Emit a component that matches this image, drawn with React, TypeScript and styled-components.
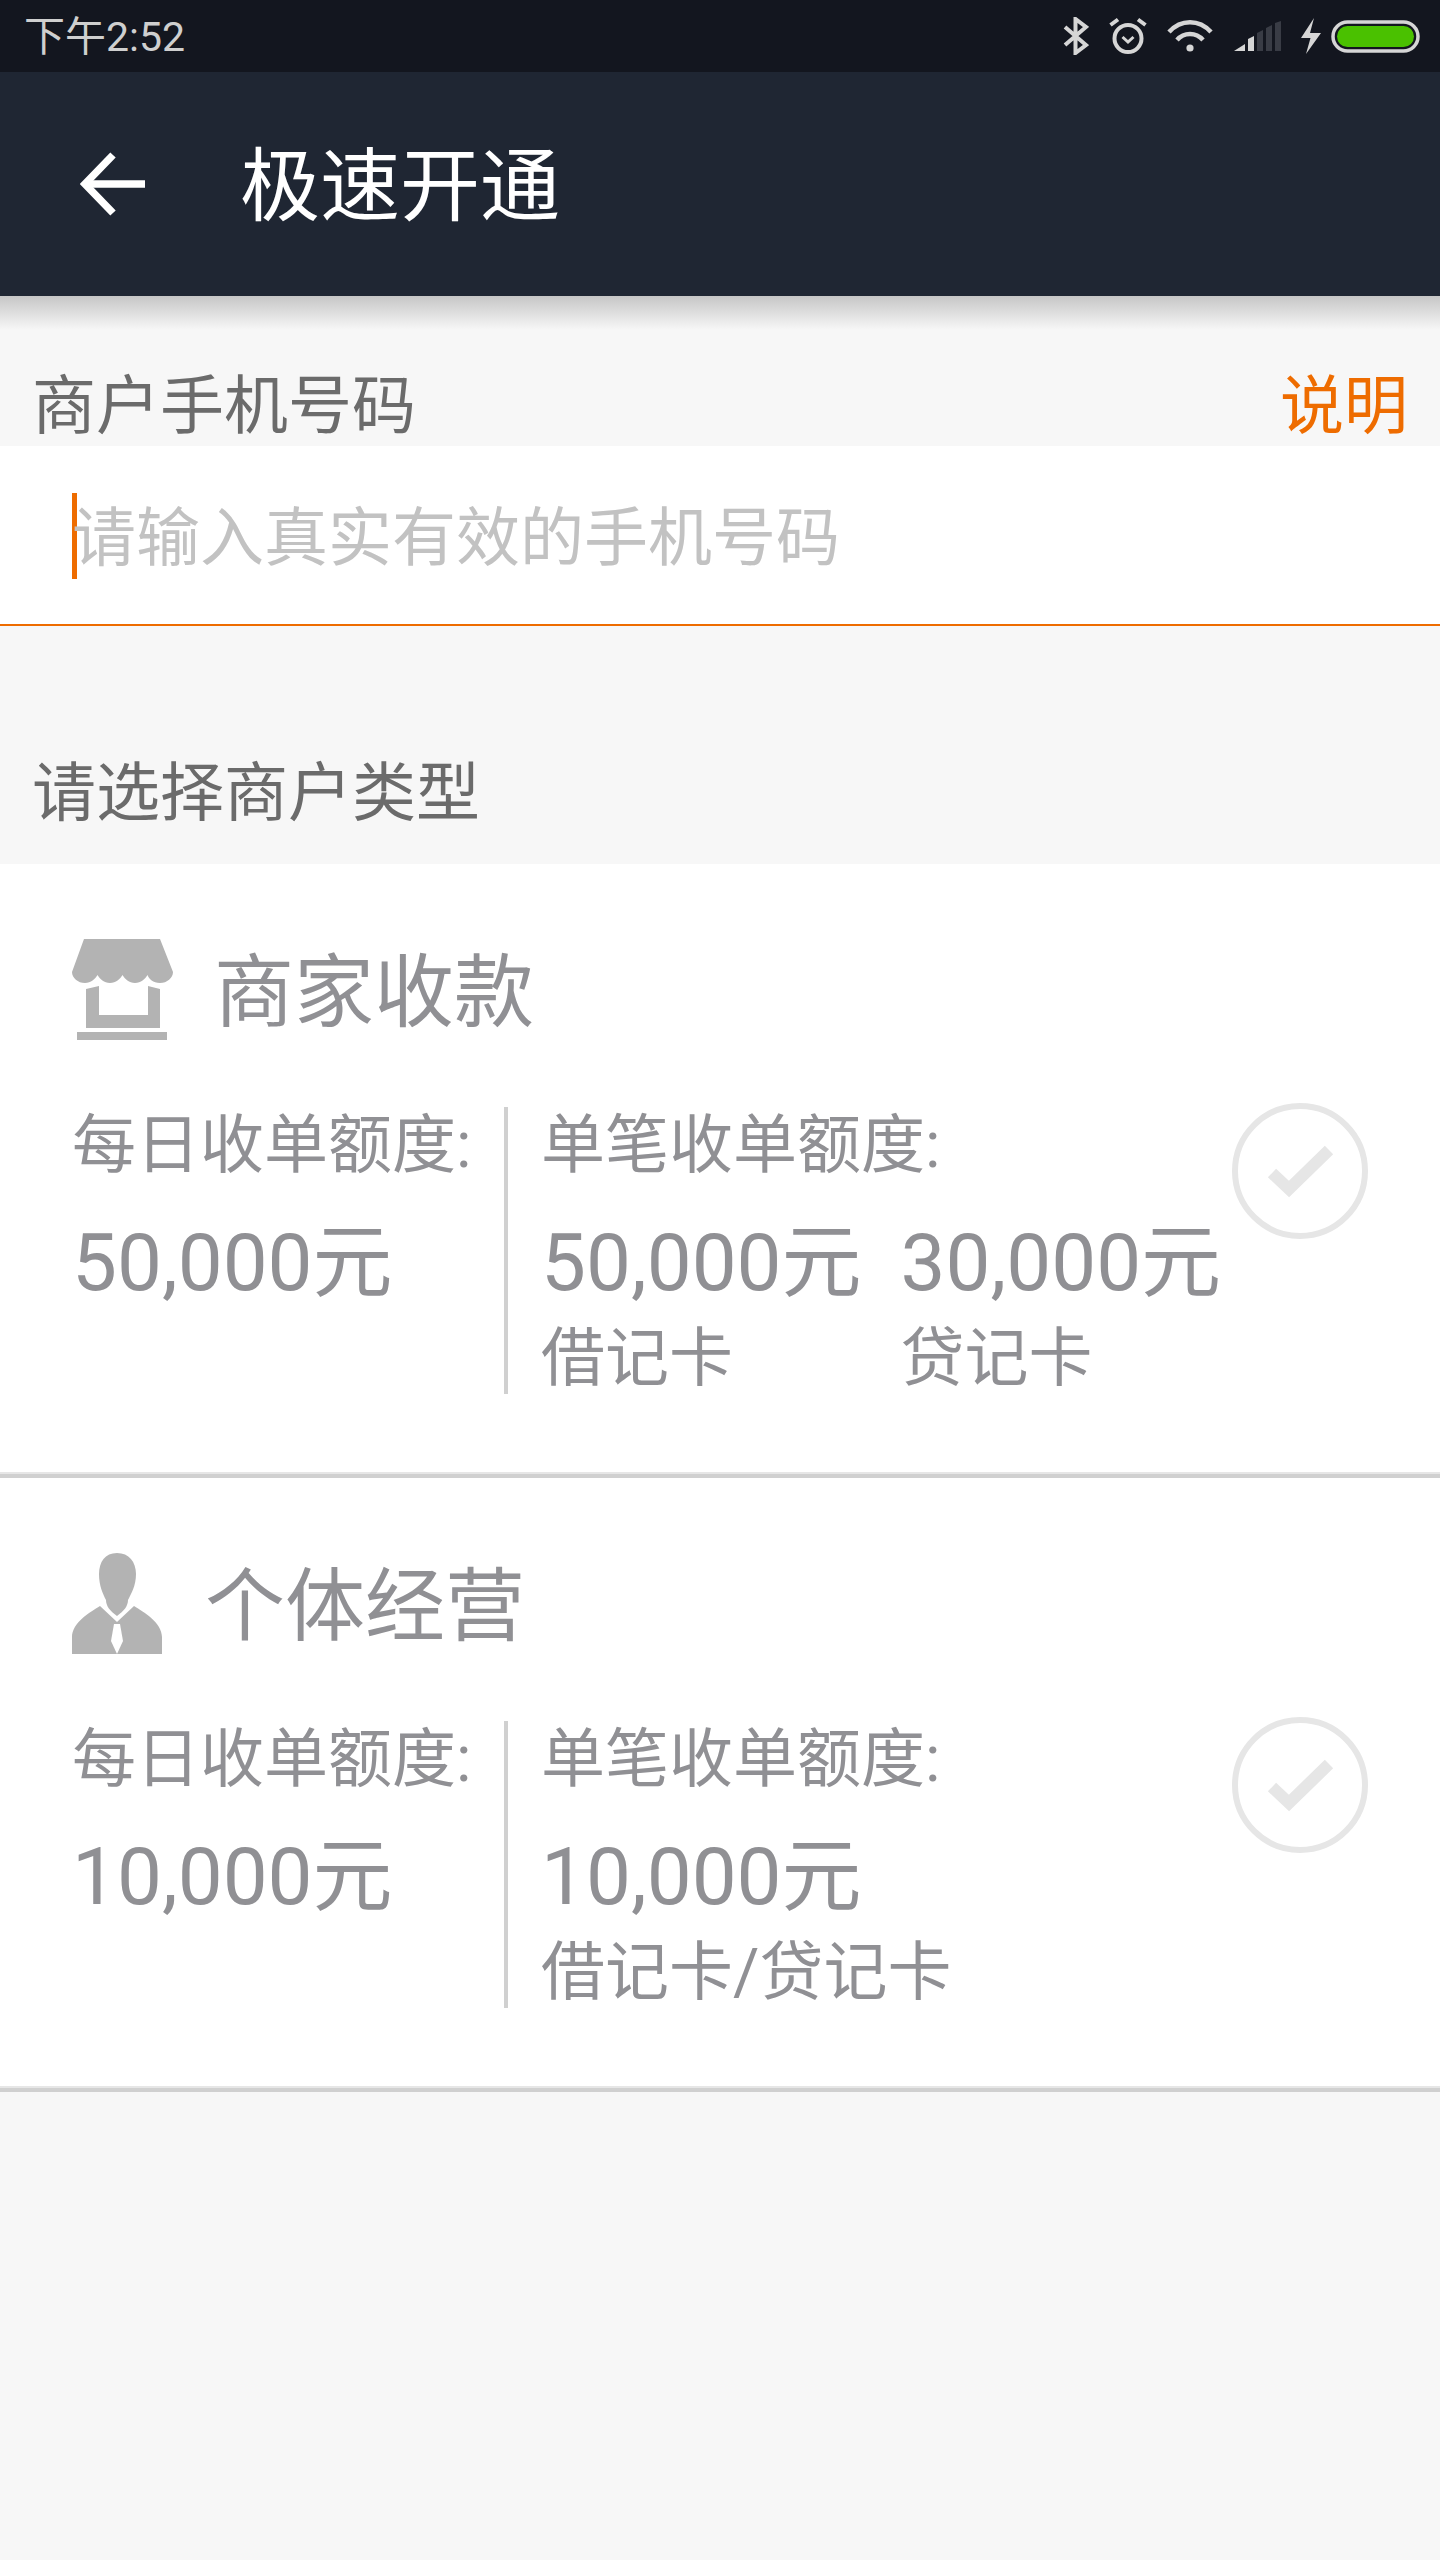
import React from "react";
import styled, { createGlobalStyle } from "styled-components";

const Global = createGlobalStyle`
  html, body { margin: 0; padding: 0; background: #f7f7f7; }
  body { font-family: Roboto, "Noto Sans CJK SC", sans-serif; }
  * { box-sizing: border-box; }
`;

const Screen = styled.div`
  width: 1440px;
  height: 2560px;
  background: #f7f7f7;
  overflow: hidden;
  display: flex;
  flex-direction: column;
`;

const StatusBar = styled.div`
  height: 72px;
  flex: none;
  background: #13161f;
  display: flex;
  align-items: center;
  justify-content: space-between;
  padding: 0 20px 0 24px;
`;

const Time = styled.span`
  font-size: 41px;
  line-height: 72px;
  margin-top: 2px;
  color: #cfcfcf;
`;

const StatusIcons = styled.div`
  display: flex;
  align-items: center;
  height: 72px;
  svg { display: block; flex: none; }
`;

const AppBar = styled.header`
  position: relative;
  height: 224px;
  flex: none;
  background: #1f2633;
  display: flex;
  align-items: center;
  padding-left: 80px;
  gap: 95px;
  &::after {
    content: "";
    position: absolute;
    left: 0;
    right: 0;
    top: 100%;
    height: 34px;
    background: linear-gradient(#c6c6c6, #f7f7f7);
  }
`;

const Title = styled.h1`
  margin: 6px 0 0;
  font-size: 80px;
  font-weight: 400;
  line-height: 1;
  color: #fff;
`;

const LabelRow = styled.div<{ $h: number; $pb?: number }>`
  height: ${(p) => p.$h}px;
  flex: none;
  display: flex;
  justify-content: space-between;
  align-items: flex-end;
  padding: 0 32px ${(p) => p.$pb ?? 0}px 32px;
`;

const Label = styled.span<{ $accent?: boolean }>`
  font-size: 64px;
  line-height: 78px;
  color: ${(p) => (p.$accent ? "#ee6c00" : "#6b6b6b")};
`;

const InputRow = styled.div`
  height: 180px;
  flex: none;
  background: #fff;
  border-bottom: 2px solid #ee6c00;
  display: flex;
  align-items: center;
  padding: 2px 0 0 72px;
`;

const Caret = styled.i`
  width: 5px;
  height: 86px;
  flex: none;
  background: #ee6c00;
`;

const Placeholder = styled.span`
  font-size: 64px;
  line-height: 86px;
  margin: 6px 0 0 -5px;
  color: #c2c2c2;
`;

const Card = styled.section`
  height: 614px;
  flex: none;
  background: #fff;
  border-bottom: 4px solid #d0d0d0;
  box-shadow: inset 0 -2px 0 #e6e6e6;
  padding: 73px 72px 0 72px;
  display: flex;
  flex-direction: column;
`;

const CardHead = styled.div<{ $gap: number }>`
  height: 104px;
  display: flex;
  align-items: center;
  gap: ${(p) => p.$gap}px;
`;

const CardName = styled.span`
  font-size: 80px;
  line-height: 104px;
  margin-top: 8px;
  color: #909094;
`;

const CardBody = styled.div`
  display: flex;
  margin-top: 66px;
`;

const Daily = styled.div`
  width: 436px;
  height: 287px;
  flex: none;
  border-right: 4px solid #d0d0d0;
`;

const Single = styled.div`
  flex: 1;
  min-width: 0;
  padding-left: 33px;
`;

const Caption = styled.div`
  font-size: 64px;
  line-height: 76px;
  margin-top: 1px;
  color: #909094;
  white-space: nowrap;
`;

const Amount = styled.div`
  font-size: 80px;
  line-height: 96px;
  margin-top: 31px;
  color: #909094;
  white-space: nowrap;
`;

const Limits = styled.div`
  display: flex;
  gap: 39px;
`;

const CheckMark = styled.svg`
  width: 136px;
  height: 136px;
  flex: none;
  margin-top: -4px;
`;

const Note = styled.div`
  font-size: 64px;
  line-height: 76px;
  margin-top: 10px;
  color: #909094;
  white-space: nowrap;
`;

const Bluetooth = () => (
  <svg width="26" height="38" viewBox="0 0 26 38" fill="none" stroke="#d6d6d6" strokeWidth="4">
    <path d="M2 10 L23 28 L12.5 36 V2 L23 10 L2 28" />
  </svg>
);

const Alarm = () => (
  <svg width="38" height="38" viewBox="0 0 38 38" fill="none" stroke="#d6d6d6" strokeWidth="4" style={{ marginLeft: 20 }}>
    <circle cx="19" cy="21.5" r="13.5" />
    <path d="M13.5 20 L19 25 L24.5 20" strokeWidth="3" />
    <path d="M1.5 8 L9 2.5 M36.5 8 L29 2.5" />
  </svg>
);

const Wifi = () => (
  <svg width="46" height="34" viewBox="0 0 46 34" fill="none" stroke="#d6d6d6" strokeWidth="4.5" style={{ marginLeft: 20 }}>
    <path d="M2 13 C14 0 32 0 44 13" />
    <path d="M10 21 C17 13 29 13 36 21" />
    <circle cx="23" cy="29" r="3.6" fill="#d6d6d6" stroke="none" />
  </svg>
);

const Signal = () => (
  <svg width="47" height="30" viewBox="0 0 47 30" style={{ marginLeft: 21 }}>
    <path d="M0 30 L11 23 V30 Z" fill="#d6d6d6" />
    <path d="M14 18 L20 15 V30 H14 Z" fill="#d6d6d6" />
    <path d="M23 12 L29 9 V30 H23 Z" fill="#393c45" />
    <path d="M32 7 L38 4 V30 H32 Z" fill="#393c45" />
    <path d="M41 2 L47 0 V30 H41 Z" fill="#393c45" />
  </svg>
);

const Bolt = () => (
  <svg width="20" height="36" viewBox="0 0 20 36" style={{ marginLeft: 20 }}>
    <path d="M13 0 L9 15 H20 L5 36 L9.5 20 H0 Z" fill="#d6d6d6" />
  </svg>
);

const Battery = () => (
  <svg width="89" height="33" viewBox="0 0 89 33" style={{ marginLeft: 10 }}>
    <rect x="2" y="2" width="85" height="29" rx="14.5" fill="none" stroke="#d6d6d6" strokeWidth="3.5" />
    <rect x="6" y="6" width="77" height="21" rx="10.5" fill="#4ac100" />
  </svg>
);

const BackArrow = () => (
  <svg width="65" height="64" viewBox="0 0 65 64" fill="none" stroke="#fff" strokeWidth="7.5">
    <path d="M65 32 H5" />
    <path d="M33 3 L5 32 L33 61" />
  </svg>
);

const StoreIcon = () => (
  <svg width="101" height="101" viewBox="0 0 101 101" fill="#b3b3b3">
    <path d="M12 0 H88 L101 33 C101 39 95 44 88 44 C81 44 77 40 75.5 36 C73 40 69 44 63 44 C57 44 53 40 50.5 36 C48 40 44 44 38 44 C32 44 28 40 25.5 36 C23 40 19 44 13 44 C6 44 0 39 0 33 Z" />
    <path d="M14 50 L27 47 V76 H76 V47 L88 50 V89 H14 Z" />
    <rect x="5" y="93" width="90" height="8" />
  </svg>
);

const PersonIcon = () => (
  <svg width="90" height="101" viewBox="0 0 90 101" fill="#b3b3b3">
    <path d="M45 0 C57 0 64 9 64 21 C64 33 59 41 56 47 C56 53 52 58 45 63 C38 58 34 53 34 47 C31 41 27 33 27 21 C27 9 33 0 45 0 Z" />
    <path d="M28 53 L45 69 L62 53 C72 59 90 70 90 84 V101 H0 V84 C0 70 18 59 28 53 Z" />
    <path d="M42 71 H48 L51 88 L45 101 L39 88 Z" fill="#fff" />
  </svg>
);

const Check = () => (
  <CheckMark viewBox="0 0 136 136" fill="none" stroke="#e6e6e6">
    <circle cx="68" cy="68" r="65" strokeWidth="6" />
    <path d="M40 70 L57 86 L97 47" strokeWidth="12" />
  </CheckMark>
);

type Plan = {
  name: string;
  icon: React.ReactNode;
  gap: number;
  daily: string;
  limits: { amount: string; note: string }[];
};

const plans: Plan[] = [
  {
    name: "商家收款",
    icon: <StoreIcon />,
    gap: 41,
    daily: "50,000元",
    limits: [
      { amount: "50,000元", note: "借记卡" },
      { amount: "30,000元", note: "贷记卡" },
    ],
  },
  {
    name: "个体经营",
    icon: <PersonIcon />,
    gap: 43,
    daily: "10,000元",
    limits: [{ amount: "10,000元", note: "借记卡/贷记卡" }],
  },
];

export default function App() {
  return (
    <Screen>
      <Global />
      <StatusBar>
        <Time>下午2:52</Time>
        <StatusIcons>
          <Bluetooth />
          <Alarm />
          <Wifi />
          <Signal />
          <Bolt />
          <Battery />
        </StatusIcons>
      </StatusBar>
      <AppBar>
        <BackArrow />
        <Title>极速开通</Title>
      </AppBar>
      <LabelRow $h={150}>
        <Label>商户手机号码</Label>
        <Label $accent>说明</Label>
      </LabelRow>
      <InputRow>
        <Caret />
        <Placeholder>请输入真实有效的手机号码</Placeholder>
      </InputRow>
      <LabelRow $h={238} $pb={31}>
        <Label>请选择商户类型</Label>
      </LabelRow>
      {plans.map((p) => (
        <Card key={p.name}>
          <CardHead $gap={p.gap}>
            {p.icon}
            <CardName>{p.name}</CardName>
          </CardHead>
          <CardBody>
            <Daily>
              <Caption>每日收单额度:</Caption>
              <Amount>{p.daily}</Amount>
            </Daily>
            <Single>
              <Caption>单笔收单额度:</Caption>
              <Limits>
                {p.limits.map((l) => (
                  <div key={l.amount}>
                    <Amount>{l.amount}</Amount>
                    <Note>{l.note}</Note>
                  </div>
                ))}
              </Limits>
            </Single>
            <Check />
          </CardBody>
        </Card>
      ))}
    </Screen>
  );
}
